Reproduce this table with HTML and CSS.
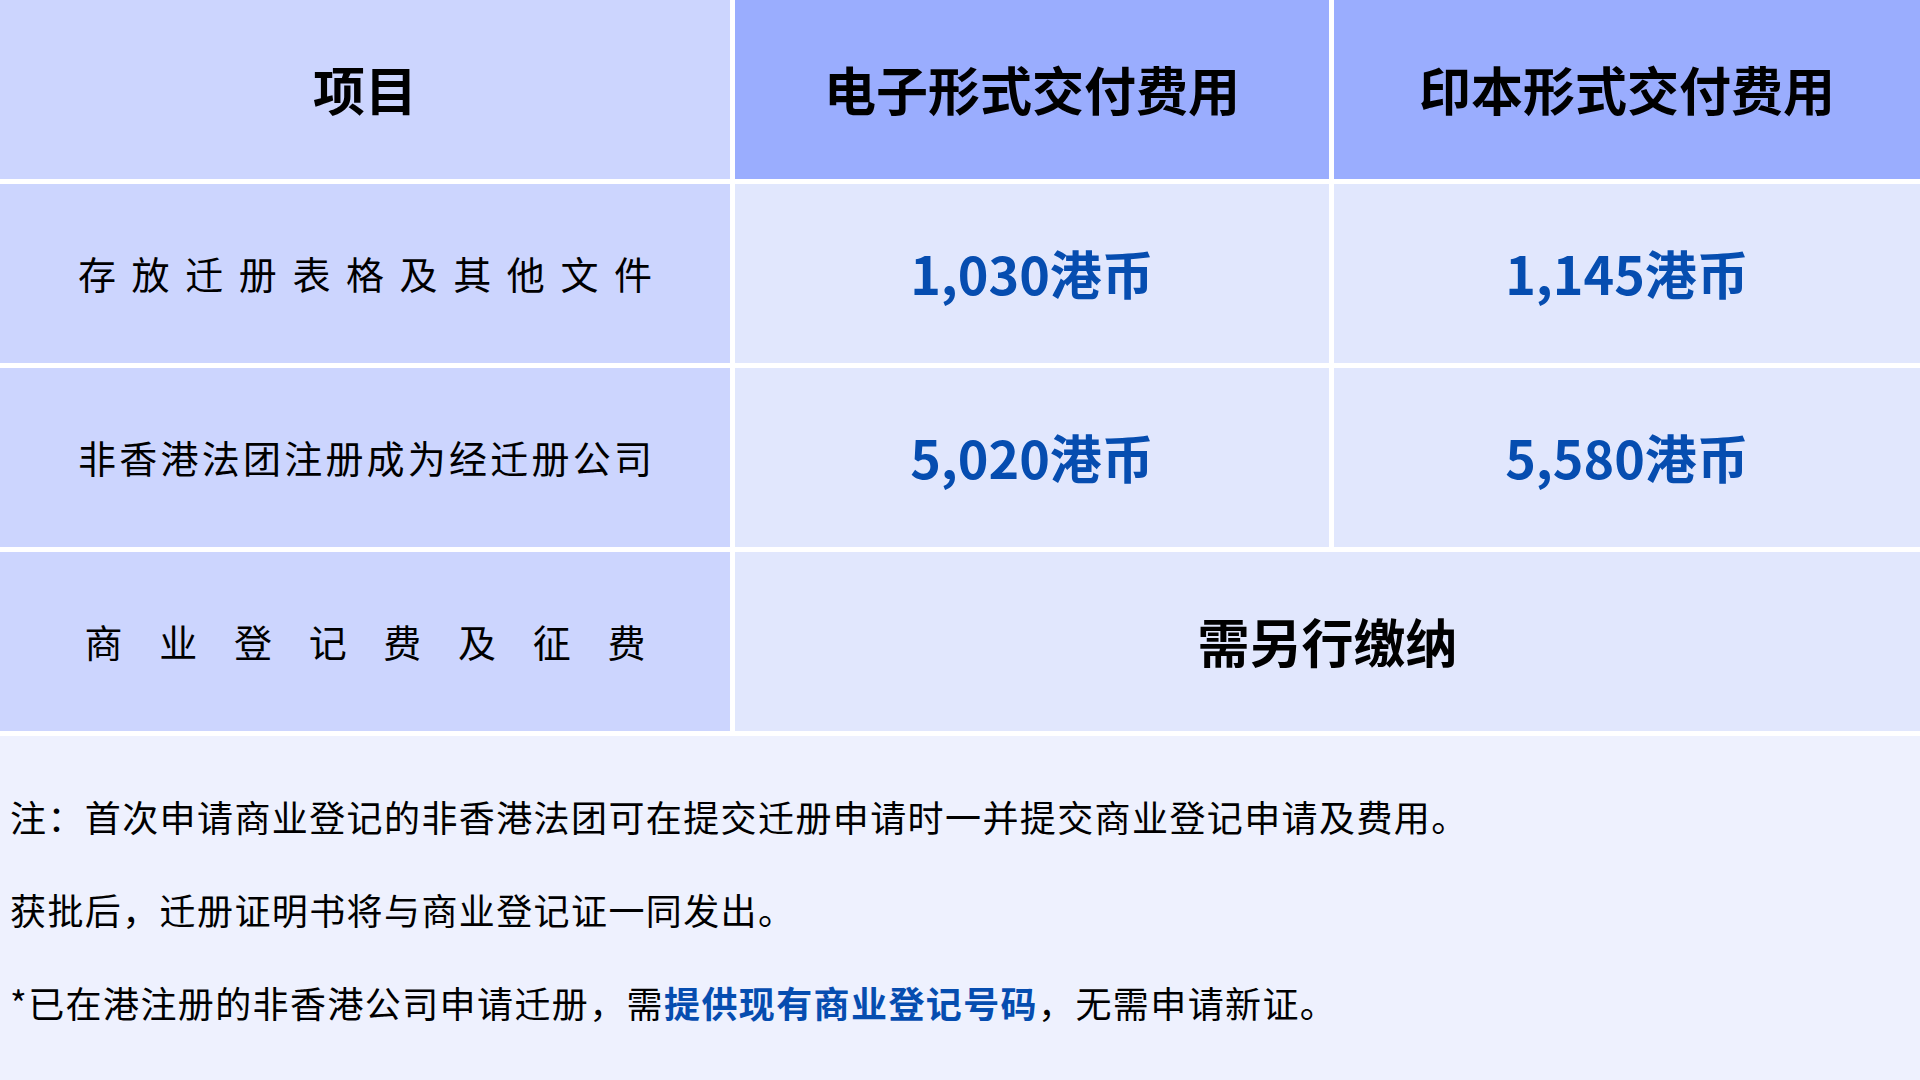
FILE: index.html
```html
<!DOCTYPE html>
<html lang="zh-CN">
<head>
<meta charset="utf-8">
<title>迁册费用</title>
<link rel="stylesheet" href="styles.css">
</head>
<body>
<div class="page">
  <div class="fee-table">
    <div class="cell head head-item">项目</div>
    <div class="cell head head-fee">电子形式交付费用</div>
    <div class="cell head head-fee">印本形式交付费用</div>

    <div class="cell label"><span class="label-text">存放迁册表格及其他文件</span></div>
    <div class="cell price">1,030港币</div>
    <div class="cell price">1,145港币</div>

    <div class="cell label"><span class="label-text">非香港法团注册成为经迁册公司</span></div>
    <div class="cell price">5,020港币</div>
    <div class="cell price">5,580港币</div>

    <div class="cell label"><span class="label-text label-text-narrow">商业登记费及征费</span></div>
    <div class="cell extra">需另行缴纳</div>
  </div>
  <div class="notes">
    <p class="note">注：首次申请商业登记的非香港法团可在提交迁册申请时一并提交商业登记申请及费用。</p>
    <p class="note">获批后，迁册证明书将与商业登记证一同发出。</p>
    <p class="note">*已在港注册的非香港公司申请迁册，需<strong class="hl">提供现有商业登记号码</strong>，无需申请新证。</p>
  </div>
</div>
</body>
</html>
```
FILE: styles.css
```css
html, body {
  margin: 0;
  padding: 0;
}
body {
  width: 1920px;
  height: 1080px;
  overflow: hidden;
  background: #eef1fe;
  font-family: "Noto Sans CJK SC", "Noto Sans", sans-serif;
  color: #000;
}
.page {
  display: flex;
  flex-direction: column;
  height: 1080px;
}
.fee-table {
  display: grid;
  grid-template-columns: 730px 594px 1fr;
  grid-template-rows: repeat(4, 179px);
  gap: 5px;
  padding-bottom: 5px;
  background: #ffffff;
}
.cell {
  display: flex;
  align-items: center;
  justify-content: center;
  line-height: 1;
}
.head {
  font-size: 52px;
  font-weight: 700;
  padding-bottom: 1px;
}
.head-item {
  background: #ccd5fe;
}
.head-fee {
  background: #9aadfe;
}
.label {
  background: #ccd5fe;
  font-size: 38px;
  font-weight: 400;
  padding-bottom: 2px;
}
.label-text {
  display: block;
  width: 574px;
  text-align: justify;
  text-align-last: justify;
  text-justify: inter-character;
}
.label-text-narrow {
  width: 561px;
}
.price {
  background: #e1e7fd;
  font-size: 52px;
  font-weight: 700;
  color: #064db0;
  padding-bottom: 2px;
}
.extra {
  grid-column: 2 / 4;
  background: #e1e7fd;
  font-size: 52px;
  font-weight: 700;
  padding-bottom: 1px;
}
.notes {
  flex: 1;
  padding: 34px 0 0 10px;
}
.note {
  margin: 0;
  font-size: 36px;
  line-height: 93px;
  letter-spacing: 1.4px;
}
.hl {
  color: #064db0;
  font-weight: 700;
}
```
